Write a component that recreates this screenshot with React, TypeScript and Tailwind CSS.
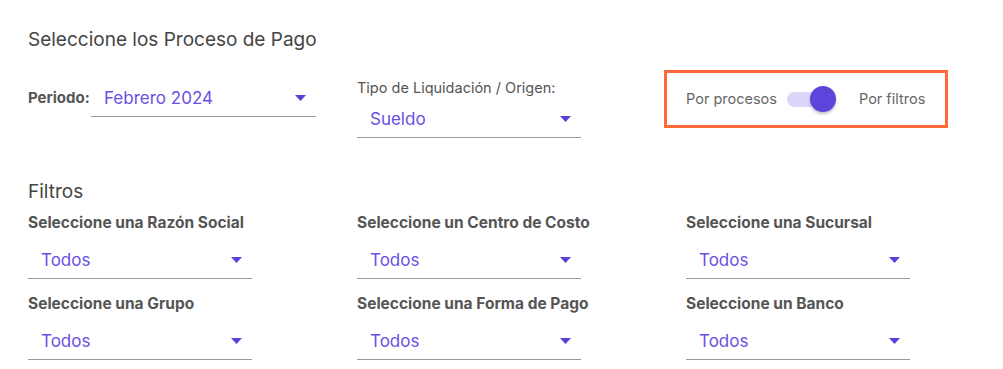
import React from "react";

function Arrow() {
  return (
    <svg width="11" height="6" viewBox="0 0 11 6" className="shrink-0">
      <path d="M0 0 L11 0 L5.5 6 Z" fill="#5b3fd9" />
    </svg>
  );
}

function Select({ value, className = "" }: { value: string; className?: string }) {
  return (
    <div
      className={
        "flex items-center justify-between border-b border-[#9a9a9a] pl-[13px] pr-[10px] pb-[6px] " + className
      }
    >
      <span className="text-[17px] leading-[24px] text-[#6a4fe4]">{value}</span>
      <Arrow />
    </div>
  );
}

function Filter({ label }: { label: string }) {
  return (
    <div className="w-[224px] flex flex-col">
      <div className="text-[15.5px] leading-[20px] font-bold text-[#555] whitespace-nowrap">{label}</div>
      <Select value="Todos" className="mt-[15px]" />
    </div>
  );
}

export default function App() {
  return (
    <div
      className="w-[1003px] h-[369px] bg-white overflow-hidden pl-[28px] pt-[28px]"
      style={{ fontFamily: "Inter, 'Noto Sans', sans-serif" }}
    >
      <div className="text-[19px] leading-[24px] text-[#454545]">Seleccione los Proceso de Pago</div>

      <div className="flex mt-[18px] h-[58px]">
        <div className="w-[329px] flex items-start pt-[16px]">
          <div className="text-[15px] leading-[24px] font-bold text-[#555] w-[63px]">Periodo:</div>
          <Select value="Febrero 2024" className="w-[225px]" />
        </div>
        <div className="w-[307px] flex flex-col pt-[8px]">
          <div className="text-[14.5px] leading-[20px] text-[#555] whitespace-nowrap">Tipo de Liquidación / Origen:</div>
          <Select value="Sueldo" className="w-[224px] mt-[9px]" />
        </div>
        <div className="w-[284px] h-[58px] border-[3px] border-[#ff6a3a] flex items-center pl-[19px]">
          <span className="text-[14.5px] leading-[20px] text-[#666] whitespace-nowrap">Por procesos</span>
          <div className="relative ml-[10px] w-[49px] h-[28px] flex items-center">
            <div className="w-[36px] h-[15px] rounded-full bg-[#dcd6fb]" />
            <div className="absolute left-[23px] top-[1px] w-[26px] h-[26px] rounded-full bg-[#5e44da] shadow-[0_2px_3px_rgba(0,0,0,0.25)]" />
          </div>
          <span className="ml-[23px] text-[14.5px] leading-[20px] text-[#666] whitespace-nowrap">Por filtros</span>
        </div>
      </div>

      <div className="mt-[52px] text-[19px] leading-[24px] text-[#454545]">Filtros</div>

      <div className="mt-[9px] grid grid-cols-[329px_329px_224px] gap-y-[15px]">
        <Filter label="Seleccione una Razón Social" />
        <Filter label="Seleccione un Centro de Costo" />
        <Filter label="Seleccione una Sucursal" />
        <Filter label="Seleccione una Grupo" />
        <Filter label="Seleccione una Forma de Pago" />
        <Filter label="Seleccione un Banco" />
      </div>
    </div>
  );
}
